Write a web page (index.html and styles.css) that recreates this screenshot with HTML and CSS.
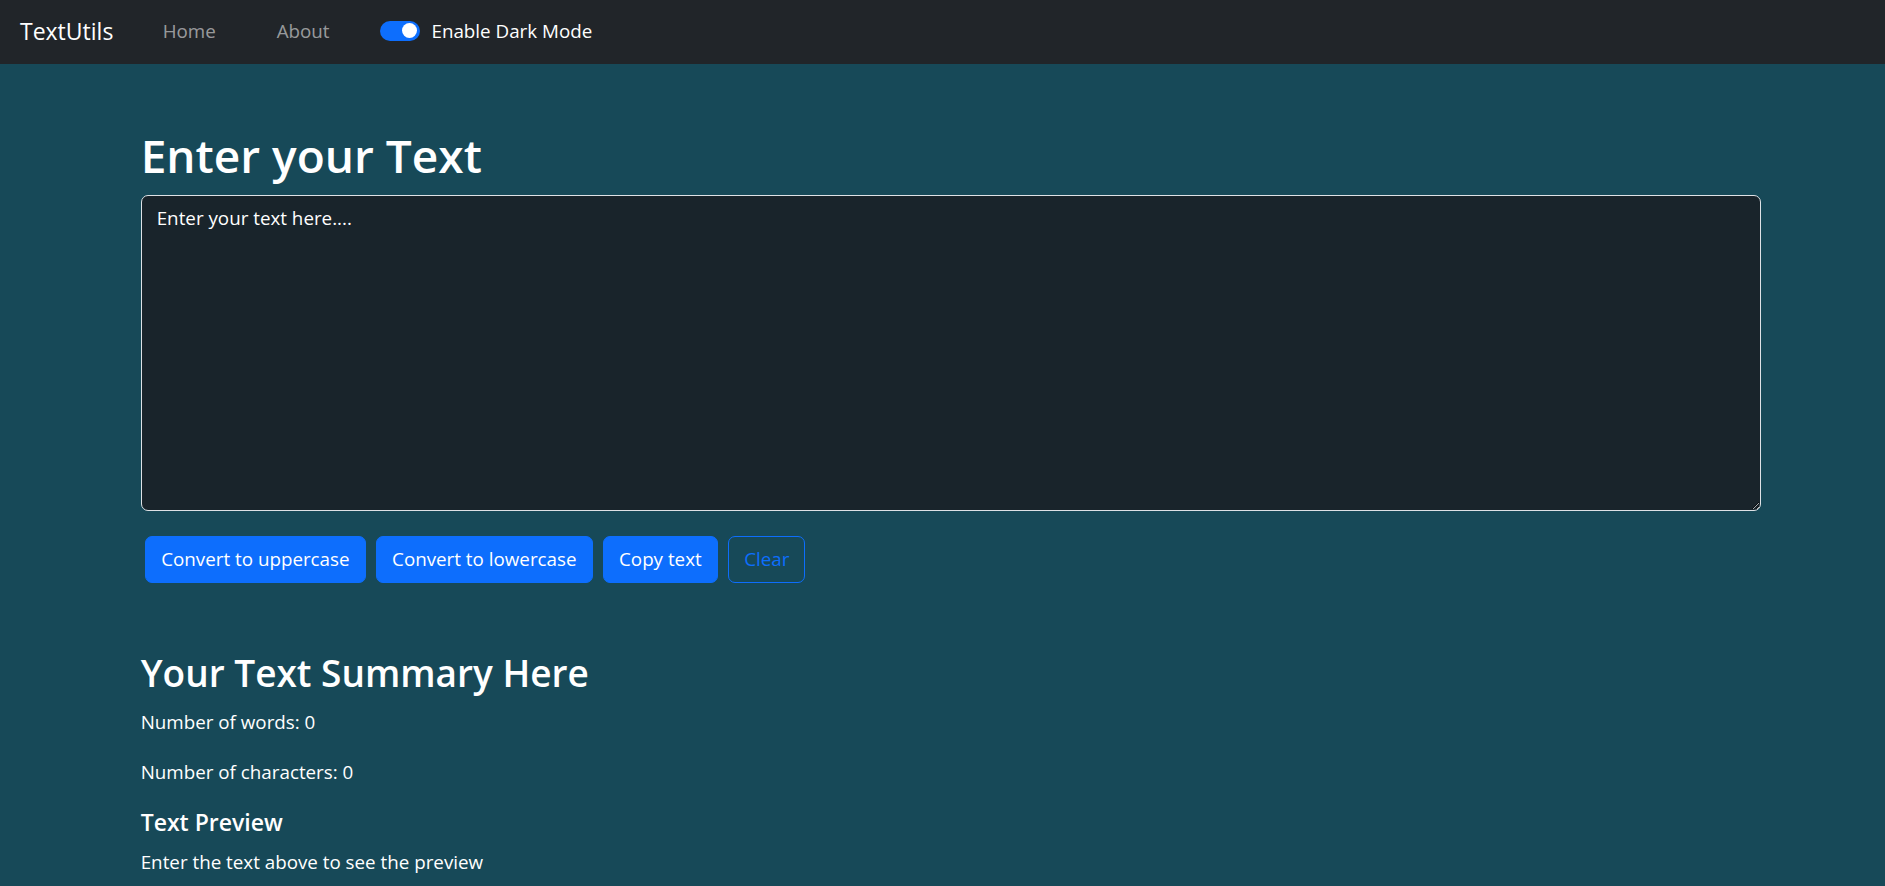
FILE: index.html
```html
<!DOCTYPE html>
<html lang="en">
<head>
<meta charset="utf-8">
<title>TextUtils</title>
<link rel="stylesheet" href="styles.css">
</head>
<body>
<nav class="navbar">
  <a class="brand" href="#">TextUtils</a>
  <a class="nav-link link-home" href="#">Home</a>
  <a class="nav-link link-about" href="#">About</a>
  <div class="switch">
    <span class="switch-track"><span class="switch-knob"></span></span>
    <label class="switch-label">Enable Dark Mode</label>
  </div>
</nav>
<main class="container">
  <h1 class="title">Enter your Text</h1>
  <textarea class="text-input" placeholder="Enter your text here...."></textarea>
  <div class="actions">
    <button class="btn btn-primary">Convert to uppercase</button>
    <button class="btn btn-primary">Convert to lowercase</button>
    <button class="btn btn-primary">Copy text</button>
    <button class="btn btn-outline">Clear</button>
  </div>
  <h2 class="summary-title">Your Text Summary Here</h2>
  <p class="line">Number of words: 0</p>
  <p class="line">Number of characters: 0</p>
  <h3 class="preview-title">Text Preview</h3>
  <p class="line">Enter the text above to see the preview</p>
</main>
</body>
</html>
```
FILE: styles.css
```css
html, body {
  margin: 0;
  padding: 0;
  overflow: hidden;
}
body {
  background: #174958;
  color: #ffffff;
  font-family: "Open Sans", "Noto Sans", sans-serif;
  font-size: 18.8px;
  line-height: 30px;
}
.navbar {
  height: 63.5px;
  background: #212529;
  display: flex;
  align-items: center;
  padding-left: 20px;
  box-sizing: border-box;
}
.brand {
  width: 142.7px;
  color: #ffffff;
  text-decoration: none;
  font-size: 23px;
  line-height: 30px;
  margin-top: -2px;
}
.nav-link {
  color: rgba(255, 255, 255, 0.55);
  text-decoration: none;
  font-size: 18.8px;
  line-height: 30px;
  margin-top: -2px;
}
.link-home { width: 114px; }
.link-about { width: 103.3px; }
.switch {
  display: flex;
  align-items: center;
  margin-top: -2px;
}
.switch-track {
  width: 40px;
  height: 20px;
  border-radius: 10px;
  background: #0d6efd;
  display: flex;
  align-items: center;
  justify-content: flex-end;
  padding-right: 2.5px;
  box-sizing: border-box;
}
.switch-knob {
  width: 15px;
  height: 15px;
  border-radius: 50%;
  background: #ffffff;
}
.switch-label {
  margin-left: 11.5px;
  color: #ffffff;
  font-size: 18.8px;
}
.container {
  padding-left: 140.7px;
  width: 1620px;
}
.title {
  margin: 61px 0 10px;
  font-size: 46px;
  line-height: 60px;
  font-weight: 600;
}
.text-input {
  display: block;
  width: 1620px;
  height: 316px;
  box-sizing: border-box;
  margin: 0;
  padding: 7.5px 15px;
  background: #19242b;
  color: #ffffff;
  border: 1px solid #dee2e6;
  border-radius: 7px;
  font-family: "Open Sans", "Noto Sans", sans-serif;
  font-size: 18.8px;
  line-height: 30px;
  resize: vertical;
  outline: none;
}
.text-input::placeholder {
  color: #ffffff;
  opacity: 1;
}
.actions {
  display: flex;
  gap: 10.5px;
  margin: 25px 0 0 4.5px;
}
.btn {
  font-family: "Open Sans", "Noto Sans", sans-serif;
  font-size: 18.8px;
  line-height: 30px;
  padding: 7.5px 15px;
  border-radius: 7px;
  border: 1px solid #0d6efd;
  cursor: pointer;
}
.btn-primary {
  background: #0d6efd;
  color: #ffffff;
}
.btn-outline {
  background: transparent;
  color: #0d6efd;
}
.summary-title {
  margin: 66px 0 10px;
  font-size: 37px;
  line-height: 48px;
  font-weight: 600;
}
.line {
  margin: 0 0 20px;
}
.preview-title {
  margin: 0 0 10px;
  font-size: 23px;
  line-height: 30px;
  font-weight: 600;
}
```
